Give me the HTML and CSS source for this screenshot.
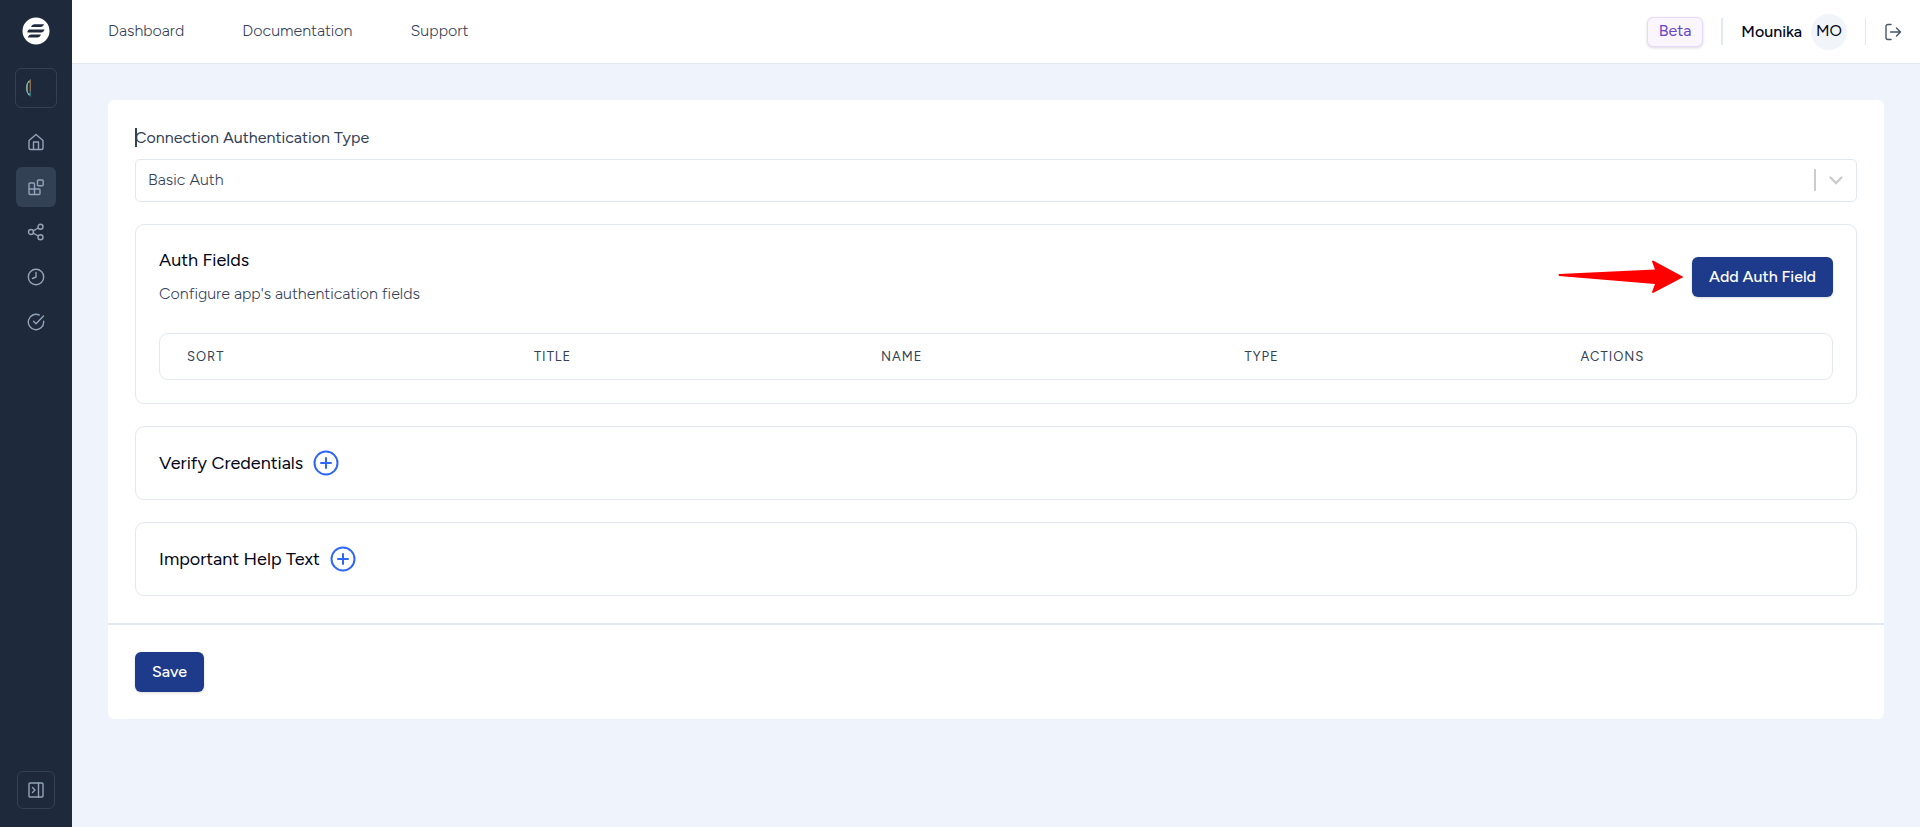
FILE: index.html
```html
<!DOCTYPE html>
<html lang="en">
<head>
  <meta charset="UTF-8">
  <meta name="viewport" content="width=device-width, initial-scale=1.0">
  <title>Authentication</title>
  <link rel="stylesheet" href="styles.css">
</head>
<body>
  <!-- Sidebar -->
  <aside class="sidebar">
    <a href="#" class="logo" aria-label="Home page">
      <svg width="28" height="28" viewBox="0 0 28 28">
        <circle cx="14" cy="14" r="13.5" fill="#fff"/>
        <path fill="#1e293b" d="M12.5 7.2H22c-.7 1.700-1.700 2.800-3.600 2.800H9c.8-1.700 1.700-2.800 3.500-2.800zM7.300 12.500H22.500c-.4 1.800-1.500 2.900-3.300 2.900H5.400c.1-1.500.6-2.900 1.900-2.900zM9.300 17.600H19c-.8 1.800-1.900 2.900-3.700 2.900H5.800c.8-1.800 1.700-2.900 3.500-2.900z"/>
      </svg>
    </a>
    <button type="button" class="workspace" aria-label="Workspace">
      <svg width="8" height="20" viewBox="0 0 8 20">
        <path d="M6 1C-.8 4-.8 16 6 19z" fill="#35708a"/>
        <path d="M4.500 3C.8 6 .8 14 4.500 17" fill="none" stroke="#8fae8f" stroke-width="1.300"/>
        <path d="M3.800 5v10" stroke="#1e293b" stroke-width="1.500"/>
        <path d="M5.500 1.500v12" stroke="#8a6f50" stroke-width="1"/>
      </svg>
    </button>
    <nav class="side-nav">
      <a href="#" class="side-link" aria-label="Home">
        <svg class="icon" viewBox="0 0 18 18"><path d="M2 7.500 9 1.500l7 6V15a1.500 1.500 0 0 1-1.500 1.500h-11A1.500 1.500 0 0 1 2 15zM6.500 16.500V9h5v7.500"/></svg>
      </a>
      <a href="#" class="side-link active" aria-label="Apps">
        <svg class="icon" viewBox="0 0 18 18"><path d="M7.500 16.500V6a1 1 0 0 0-1-1H3a1 1 0 0 0-1 1v9.500a1 1 0 0 0 1 1h9a1 1 0 0 0 1-1V12a1 1 0 0 0-1-1H2"/><rect x="10.500" y="2" width="5.700" height="5.700" rx="1"/></svg>
      </a>
      <a href="#" class="side-link" aria-label="Flows">
        <svg class="icon" viewBox="0 0 18 18"><circle cx="4" cy="9" r="2.500"/><circle cx="13.500" cy="3.800" r="2.500"/><circle cx="13.500" cy="14.200" r="2.500"/><path d="m6.200 7.800 5.100-2.800M6.200 10.200l5.100 2.800"/></svg>
      </a>
      <a href="#" class="side-link" aria-label="History">
        <svg class="icon" viewBox="0 0 18 18"><circle cx="9" cy="9" r="7.700"/><path d="M9 4.500V9l-3.500 1.500"/></svg>
      </a>
      <a href="#" class="side-link" aria-label="Tasks">
        <svg class="icon" viewBox="0 0 18 18"><path d="M16.700 8.300V9a7.700 7.700 0 1 1-4.500-7"/><path d="M16.500 3 9 10.800 6.500 8.300"/></svg>
      </a>
    </nav>
    <button type="button" class="expand" aria-label="Expand sidebar">
      <svg class="icon" viewBox="0 0 18 18"><rect x="2" y="2" width="14" height="14" rx="1"/><path d="M11.500 2v14M5.500 6.500 8 9l-2.500 2.500"/></svg>
    </button>
  </aside>

  <div class="page">
    <!-- Top bar -->
    <header class="topbar">
      <nav class="top-nav">
        <a href="#">Dashboard</a>
        <a href="#">Documentation</a>
        <a href="#">Support</a>
      </nav>
      <div class="account">
        <span class="beta">Beta</span>
        <span class="divider thick"></span>
        <div class="user">
          <span class="user-name">Mounika</span>
          <span class="avatar">MO</span>
        </div>
        <span class="divider"></span>
        <button type="button" class="logout" aria-label="Log out">
          <svg class="icon" viewBox="0 0 18 18"><path d="M7 1.500H4A2 2 0 0 0 2 3.500v11a2 2 0 0 0 2 2h3M6.500 9h10M12.500 5l4 4-4 4"/></svg>
        </button>
      </div>
    </header>

    <main class="content">
      <form class="card">
        <div class="card-body">
          <div class="field">
            <label for="auth-type">Connection Authentication Type</label>
            <div class="select-wrap">
              <select id="auth-type">
                <option>Basic Auth</option>
              </select>
              <span class="select-arrow">
                <svg width="20" height="20" viewBox="0 0 20 20"><path d="M4.500 7.500 10 13l5.500-5.500" fill="none" stroke="#ccc" stroke-width="2.400" stroke-linecap="round"/></svg>
              </span>
            </div>
          </div>

          <!-- Auth fields -->
          <section class="panel">
            <div class="panel-head">
              <div>
                <h2>Auth Fields</h2>
                <p>Configure app's authentication fields</p>
              </div>
              <div class="panel-action">
                <svg class="pointer" width="126" height="34" viewBox="0 0 126 34"><path fill="#f00" d="M1 14 97 9.500 94 1.500Q94.500 0 96 1l29.500 16L96 32.500Q94.500 33.500 94 32l3-8L1 16Q0 15 1 14z"/></svg>
                <button type="button" class="btn">Add Auth Field</button>
              </div>
            </div>
            <div class="table-wrap">
              <table>
                <thead>
                  <tr>
                    <th class="col-sort">Sort</th>
                    <th class="col-title">Title</th>
                    <th class="col-name">Name</th>
                    <th class="col-type">Type</th>
                    <th>Actions</th>
                  </tr>
                </thead>
              </table>
            </div>
          </section>

          <section class="panel panel-row">
            <h2>Verify Credentials</h2>
            <button type="button" class="add" aria-label="Add verify credentials">
              <svg width="26" height="26" viewBox="0 0 26 26"><circle cx="13" cy="13" r="11.500"/><path d="M13 8v10M8 13h10"/></svg>
            </button>
          </section>

          <section class="panel panel-row">
            <h2>Important Help Text</h2>
            <button type="button" class="add" aria-label="Add help text">
              <svg width="26" height="26" viewBox="0 0 26 26"><circle cx="13" cy="13" r="11.500"/><path d="M13 8v10M8 13h10"/></svg>
            </button>
          </section>
        </div>

        <div class="card-footer">
          <button type="button" class="btn">Save</button>
        </div>
      </form>
    </main>
  </div>
</body>
</html>
```
FILE: styles.css
```css
/* General Styles */
* {
  margin: 0;
  padding: 0;
  box-sizing: border-box;
}

body {
  display: flex;
  min-height: 100vh;
  font-family: Figtree, Inter, "Liberation Sans", sans-serif;
  font-size: 16px;
  line-height: 24px;
  color: #334155;
  background: #eff3fb;
}

a {
  color: inherit;
  text-decoration: none;
}

button {
  font: inherit;
  color: inherit;
  background: none;
  border: none;
  cursor: pointer;
}

svg {
  display: block;
}

.icon {
  width: 18px;
  height: 18px;
  fill: none;
  stroke: currentColor;
  stroke-width: 1.4;
  stroke-linecap: round;
  stroke-linejoin: round;
}

/* Sidebar */
.sidebar {
  display: flex;
  flex-direction: column;
  align-items: center;
  width: 72px;
  flex-shrink: 0;
  padding: 17px 0 18px;
  background: #1e293b;
  color: #94a3b8;
}

.workspace {
  display: flex;
  align-items: center;
  width: 42px;
  height: 40px;
  margin: 23px 0 14px;
  padding-left: 9px;
  border: 1px solid #334155;
  border-radius: 6px;
}

.side-nav {
  display: flex;
  flex-direction: column;
  gap: 5px;
}

.side-link {
  display: flex;
  align-items: center;
  justify-content: center;
  width: 40px;
  height: 40px;
  border-radius: 6px;
}

.side-link.active {
  background: #334155;
}

.expand {
  display: flex;
  align-items: center;
  justify-content: center;
  width: 38px;
  height: 38px;
  margin-top: auto;
  border: 1px solid #334155;
  border-radius: 6px;
}

/* Top bar */
.page {
  flex: 1;
  min-width: 0;
}

.topbar {
  display: flex;
  align-items: center;
  justify-content: space-between;
  height: 64px;
  padding: 0 18px 0 36px;
  background: #fff;
  border-bottom: 1px solid #e2e8f0;
}

.top-nav {
  display: flex;
  gap: 58px;
  padding-bottom: 2px;
  font-weight: 300;
  color: #334155;
}

.account {
  display: flex;
  align-items: center;
  gap: 18px;
}

.beta {
  padding: 1px 11px 3px;
  color: #6b46c1;
  background: #faf5ff;
  border: 1px solid #e9d8fd;
  border-radius: 6px;
  box-shadow: 0 1px 3px rgba(0, 0, 0, 0.15);
}

.divider {
  width: 1px;
  height: 27px;
  background: #e2e8f0;
}

.divider.thick {
  width: 2px;
}

.user {
  display: flex;
  align-items: center;
  gap: 9px;
  color: #020617;
}

.user-name {
  font-weight: 500;
}

.avatar {
  width: 36px;
  height: 36px;
  line-height: 34px;
  text-align: center;
  background: #f1f5f9;
  border-radius: 50%;
}

.logout {
  color: #475569;
}

/* Card */
.content {
  padding: 36px;
}

.card {
  background: #fff;
  border-radius: 6px;
}

.card-body {
  display: flex;
  flex-direction: column;
  gap: 22px;
  padding: 27px;
}

.card-footer {
  padding: 27px;
  border-top: 2px solid #e2e8f0;
}

.field label {
  position: relative;
  display: block;
  margin-bottom: 10px;
  line-height: 22px;
}

/* Text cursor in front of the label */
.field label::before {
  content: "";
  position: absolute;
  left: 0;
  top: 1px;
  width: 2px;
  height: 19px;
  background: #334155;
}

.select-wrap {
  position: relative;
}

.select-wrap select {
  display: block;
  width: 100%;
  height: 43px;
  padding: 0 60px 1px 12px;
  font: inherit;
  font-weight: 300;
  color: #334155;
  background: #fff;
  border: 1px solid #e2e8f0;
  border-radius: 5px;
  appearance: none;
}

.select-arrow {
  position: absolute;
  top: 10px;
  right: 10px;
  padding: 1px 1px 1px 10px;
  border-left: 2px solid #ccc;
  pointer-events: none;
}

/* Panels */
.panel {
  padding: 23px;
  border: 1px solid #e2e8f0;
  border-radius: 9px;
}

.panel h2 {
  font-size: 18px;
  font-weight: 400;
  line-height: 25px;
  color: #020617;
}

.panel-head {
  display: flex;
  align-items: center;
  justify-content: space-between;
  margin-bottom: 27px;
}

.panel-head p {
  margin-top: 9px;
  font-weight: 300;
}

.panel-action {
  display: flex;
  align-items: center;
  gap: 8px;
}

.panel-row {
  display: flex;
  align-items: center;
  gap: 10px;
}

.btn {
  padding: 8px 17px;
  font-weight: 500;
  color: #fff;
  background: #1e3a8a;
  border-radius: 6px;
  box-shadow: 0 1px 3px rgba(0, 0, 0, 0.15);
}

.add svg {
  fill: none;
  stroke: #2f66f6;
  stroke-width: 2;
  stroke-linecap: round;
}

/* Table */
.table-wrap {
  border: 1px solid #e2e8f0;
  border-radius: 9px;
}

table {
  width: 100%;
  table-layout: fixed;
  border-collapse: collapse;
}

th {
  padding: 11px 27px;
  font-size: 13px;
  font-weight: 400;
  line-height: 23px;
  letter-spacing: 1px;
  text-align: left;
  text-transform: uppercase;
}

.col-sort,
.col-title {
  width: 20.75%;
}

.col-name {
  width: 21.75%;
}

.col-type {
  width: 20.1%;
}
```
